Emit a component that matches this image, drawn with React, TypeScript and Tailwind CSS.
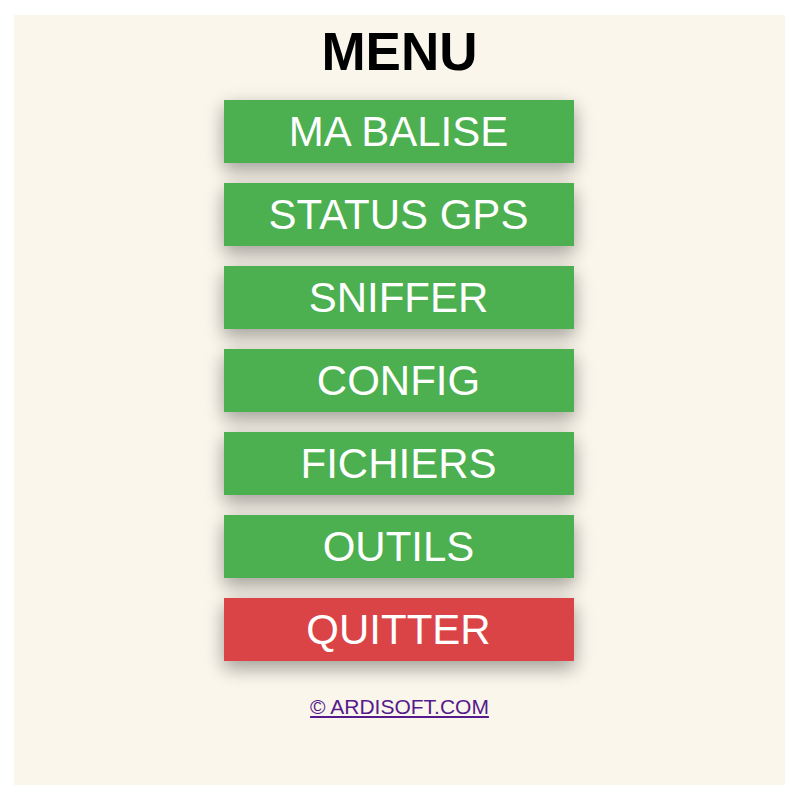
const items = ["MA BALISE", "STATUS GPS", "SNIFFER", "CONFIG", "FICHIERS", "OUTILS"];

export default function App() {
  return (
    <div className="min-h-[800px] bg-white pt-[15px] pl-[14px] pr-[15px] font-['Liberation_Sans',Arial,sans-serif]">
      <div className="flex h-[770px] flex-col items-center bg-[#faf6ec] pt-[8px]">
        <h1 className="text-[53px] font-bold leading-[58px] text-black">MENU</h1>
        <div className="mt-[19px] mr-[2px] flex flex-col gap-[20px]">
          {items.map((label) => (
            <button
              key={label}
              className="flex h-[63px] w-[350px] items-center justify-center bg-[#4caf50] text-[42px] text-white shadow-[0_8px_16px_0_rgba(0,0,0,0.2),0_6px_20px_0_rgba(0,0,0,0.19)]"
            >
              {label}
            </button>
          ))}
          <button className="flex h-[63px] w-[350px] items-center justify-center bg-[#db4446] text-[42px] text-white shadow-[0_8px_16px_0_rgba(0,0,0,0.2),0_6px_20px_0_rgba(0,0,0,0.19)]">
            QUITTER
          </button>
        </div>
        <a href="#" className="mt-[34px] text-[21px] leading-[24px] text-[#551a8b] underline">
          © ARDISOFT.COM
        </a>
      </div>
    </div>
  );
}
